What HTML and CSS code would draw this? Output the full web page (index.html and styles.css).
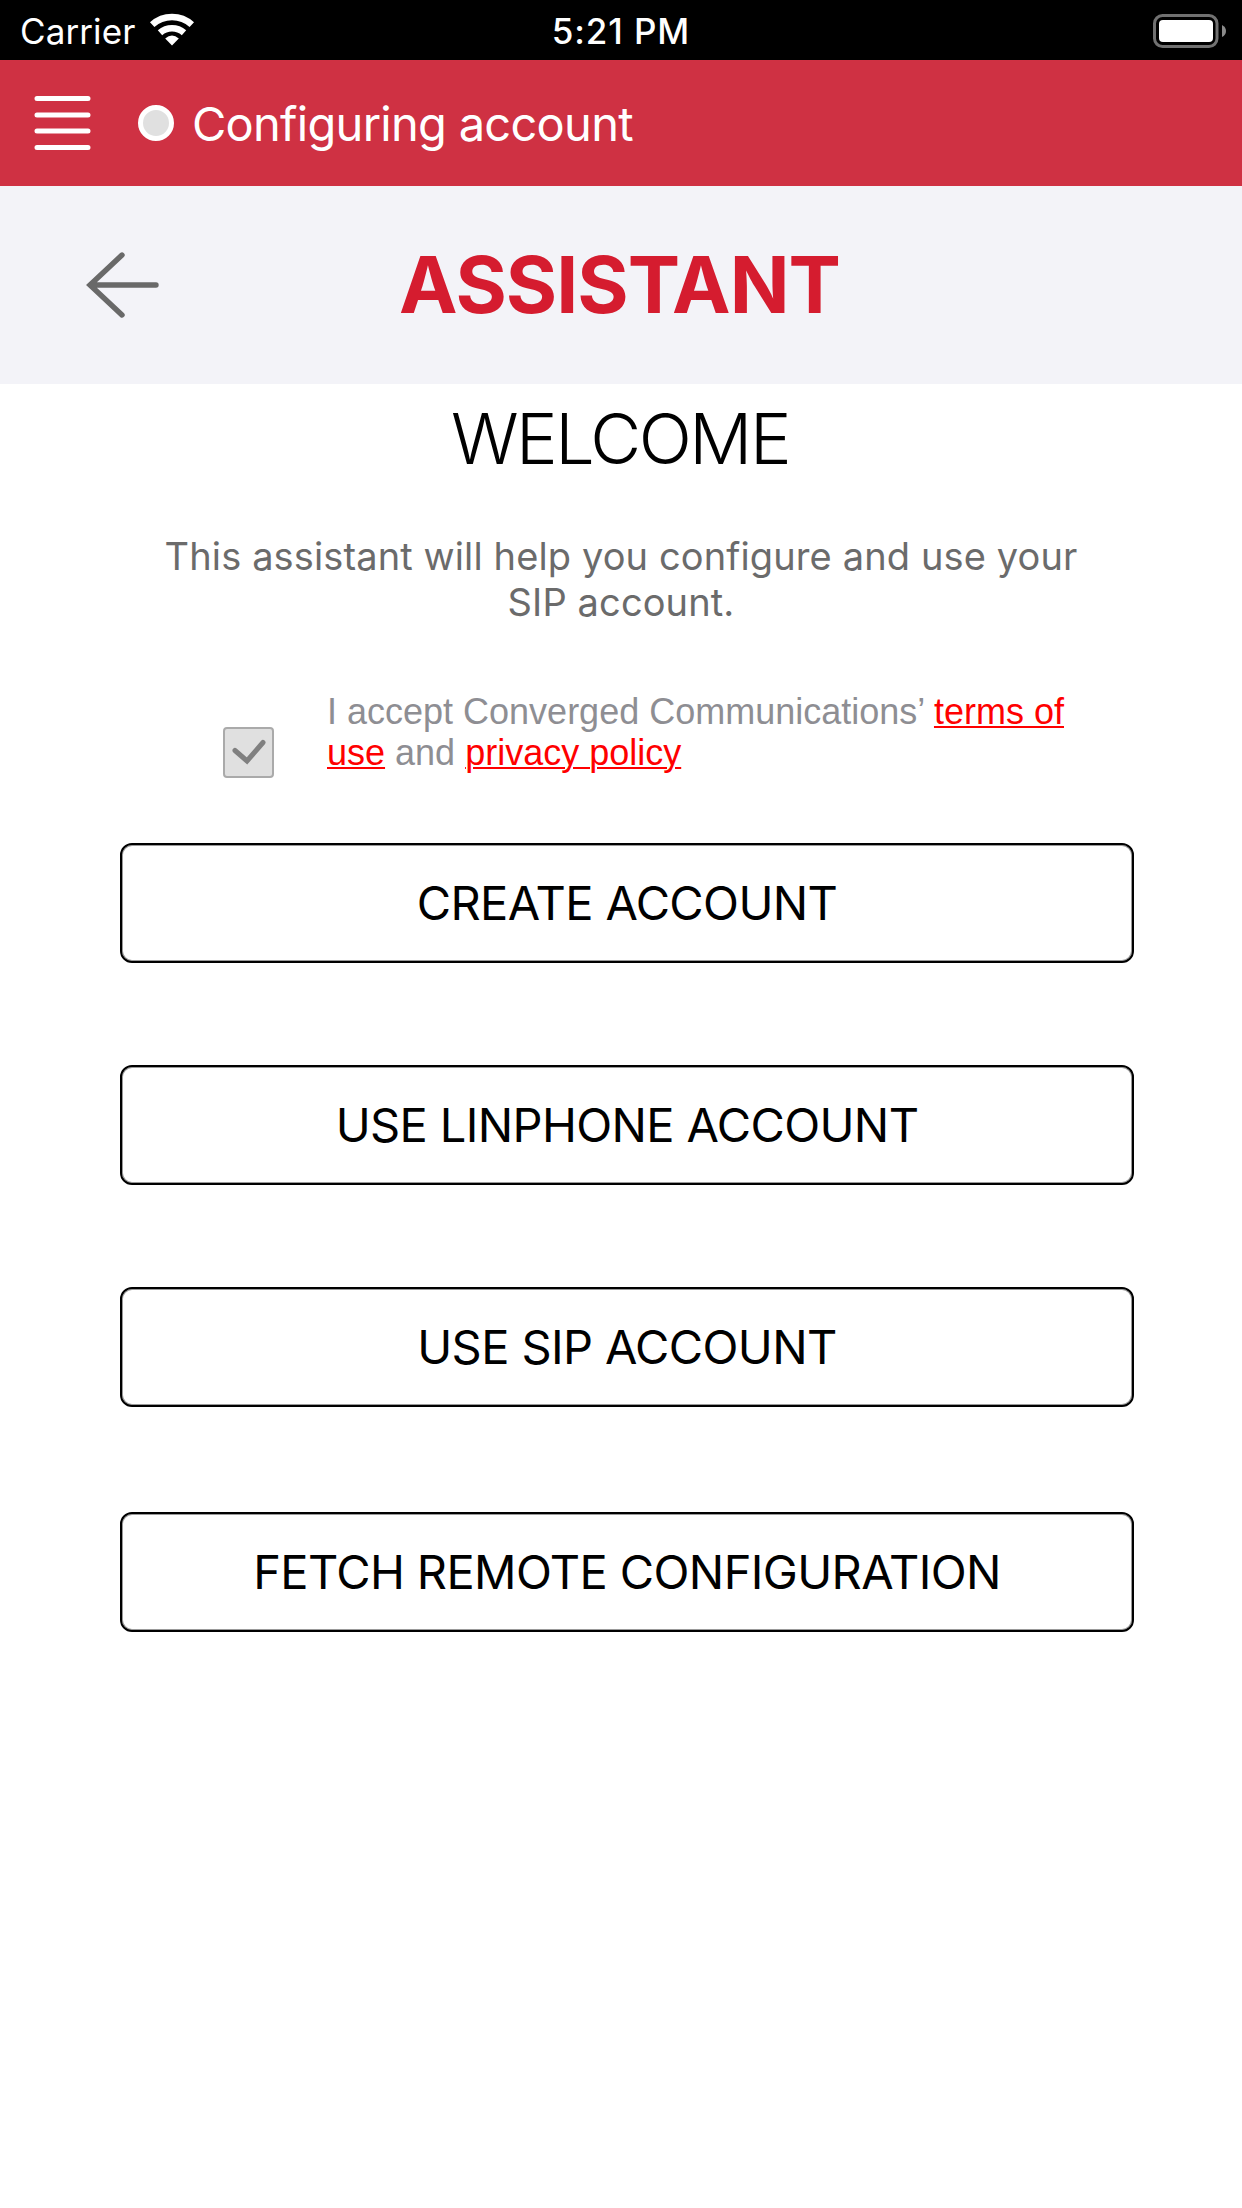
FILE: index.html
```html
<!DOCTYPE html>
<html lang="en">
<head>
<meta charset="utf-8">
<title>Assistant</title>
<link rel="stylesheet" href="styles.css">
</head>
<body>
<div class="status-bar">
  <div class="carrier"><span class="carrier-name">Carrier</span>
    <svg class="wifi" width="48" height="36" viewBox="0 0 48 36" fill="none" stroke="#fff">
      <path d="M3.2 12.6A29.5 29.5 0 0 1 42.8 12.6" stroke-width="6.6"/>
      <path d="M11 20.8A18 18 0 0 1 35 20.8" stroke-width="6.6"/>
      <path d="M16.2 26.6Q23 20.6 29.8 26.6L23 33.5Z" fill="#fff" stroke="none"/>
    </svg>
  </div>
  <span class="clock">5:21 PM</span>
  <svg class="battery" width="76" height="36" viewBox="0 0 76 36">
    <rect x="2.5" y="2.5" width="62.5" height="31" rx="8" fill="none" stroke="#717171" stroke-width="3"/>
    <rect x="7" y="7" width="54" height="22" rx="4" fill="#fff"/>
    <path d="M70 12Q74 14 74 18T70 24Z" fill="#8a8a8a"/>
  </svg>
</div>
<header class="account-bar">
  <svg class="menu" width="58" height="56" viewBox="0 0 58 56" stroke="#fff" stroke-width="5" stroke-linecap="round">
    <path d="M3 3.5h51M3 20h51M3 36h51M3 52.5h51"/>
  </svg>
  <span class="presence"></span>
  <span class="account-state">Configuring account</span>
</header>
<div class="title-bar">
  <svg class="back" width="74" height="68" viewBox="0 0 74 68" fill="none" stroke="#696969" stroke-width="5.4" stroke-linecap="round">
    <path d="M36 4L4 34L36 64M5 34H70"/>
  </svg>
  <h1 class="title">ASSISTANT</h1>
</div>
<main class="content">
  <h2 class="welcome">WELCOME</h2>
  <p class="intro">This assistant will help you configure and use your<br>SIP account.</p>
  <div class="terms">
    <svg class="checkbox" width="51" height="51" viewBox="0 0 51 51" fill="none">
      <rect x="1" y="1" width="49" height="49" rx="3" fill="#e0e0e0" stroke="#aaa" stroke-width="2"/>
      <path d="M12 23.5L24 34L40 15.5" stroke="#808080" stroke-width="5" stroke-linecap="round"/>
    </svg>
    <p class="terms-text">I accept Converged Communications’ <a class="link">terms of</a><br><a class="link">use</a> and <a class="link">privacy policy</a></p>
  </div>
  <div class="actions">
    <button class="action">CREATE ACCOUNT</button>
    <button class="action">USE LINPHONE ACCOUNT</button>
    <button class="action">USE SIP ACCOUNT</button>
    <button class="action action-remote">FETCH REMOTE CONFIGURATION</button>
  </div>
</main>
</body>
</html>
```
FILE: styles.css
```css
* { box-sizing: border-box; }
body { margin: 0; background: #fff; color: #000; font-family: Inter, "Liberation Sans", sans-serif; }
h1, h2, p { margin: 0; font-weight: 400; }
svg { display: block; flex: none; }
span { white-space: nowrap; }

.status-bar { height: 60px; padding: 0 14px 0 20px; background: #000; color: #fff; display: grid; grid-template-columns: 1fr auto 1fr; align-items: center; font-size: 35px; line-height: 60px; }
.carrier { display: flex; align-items: center; padding-top: 1px; }
.carrier-name { width: 129px; letter-spacing: 0.1px; }
.wifi { margin-top: -3px; }
.clock { font-weight: 500; padding-top: 0; margin-left: -6px; letter-spacing: 0.9px; }
.battery { justify-self: end; }

.account-bar { height: 126px; padding-left: 34px; background: #cf3143; color: #fff; display: flex; align-items: center; }
.presence { width: 36px; height: 36px; margin: 0 18px 0 46px; border: 5px solid #fff; border-radius: 50%; background: #e0e0e0; }
.account-state { font-size: 47px; line-height: 60px; letter-spacing: -0.72px; padding-top: 1px; }

.title-bar { height: 198px; padding-left: 86px; background: #f3f3f8; display: flex; align-items: center; }
.title { color: #d51c2f; font-weight: 700; font-size: 78.5px; line-height: 100px; letter-spacing: -1px; margin-left: 239px; }

.content { padding: 0 108px 0 120px; }
.welcome { margin-left: -14px; text-align: center; font-weight: 300; font-size: 70px; line-height: 109px; letter-spacing: -2.5px; }
.intro { margin: 40px 0 0 -12px; text-align: center; color: #6b6b6b; font-size: 38px; line-height: 46px; letter-spacing: 0.12px; }
.terms { display: flex; margin: 67px 0 0 103px; }
.checkbox { margin-top: 35px; }
.terms-text { margin: -1px 0 0 53px; color: #8e8e93; font-family: "Liberation Sans", sans-serif; font-size: 36px; line-height: 41px; }
.link { color: #f00; text-decoration: underline; text-decoration-thickness: 2px; text-underline-offset: 2px; }
.actions { margin-top: 65px; display: flex; flex-direction: column; gap: 102px; }
.action { height: 120px; padding: 0; border: 2px solid #000; border-radius: 12px; box-shadow: inset 0 0 0 1px #999; background: #fff; color: #000; font: 400 47px/60px Inter, sans-serif; letter-spacing: -0.62px; }
.action-remote { margin-top: 3px; }
```
